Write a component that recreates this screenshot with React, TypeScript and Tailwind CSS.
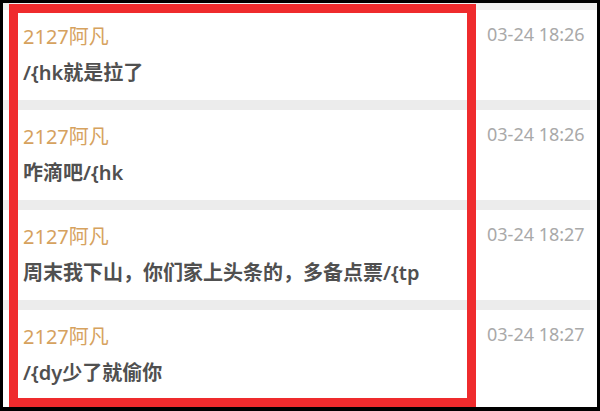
const messages = [
  { name: "2127阿凡", text: "/{hk就是拉了", time: "03-24 18:26" },
  { name: "2127阿凡", text: "咋滴吧/{hk", time: "03-24 18:26" },
  {
    name: "2127阿凡",
    text: "周末我下山，你们家上头条的，多备点票/{tp",
    time: "03-24 18:27",
  },
  { name: "2127阿凡", text: "/{dy少了就偷你", time: "03-24 18:27" },
];

export default function App() {
  return (
    <div className="w-[600px] h-[411px] bg-black pt-[3px] pl-[3px] pr-[3px] pb-[4px] font-['Noto_Sans','Noto_Sans_CJK_SC',sans-serif]">
      <div className="relative h-full bg-white overflow-hidden">
        {/* Chat list */}
        <div className="h-[7px] bg-[#efefef]" />
        {messages.map((m, i) => (
          <div key={i}>
            {i > 0 && <div className="h-[10px] bg-[#ececec]" />}
            <div className="flex h-[90px]">
              <div className="w-[474px] pl-[20px] pt-[15px]">
                <div className="text-[20px] leading-[24px] text-[#d6a25e]">
                  {m.name}
                </div>
                <div className="mt-[12px] text-[20px] leading-[24px] font-semibold text-[#505050] whitespace-nowrap">
                  {m.text}
                </div>
              </div>
              <div className="pl-[10px] pt-[12px] text-[18px] leading-[24px] text-[#a9a9a9] whitespace-nowrap">
                {m.time}
              </div>
            </div>
          </div>
        ))}

        {/* Highlight box */}
        <div className="absolute left-[6px] top-[1px] w-[467px] h-[403px] border-[9px] border-[#ef2b2d]" />
      </div>
    </div>
  );
}
